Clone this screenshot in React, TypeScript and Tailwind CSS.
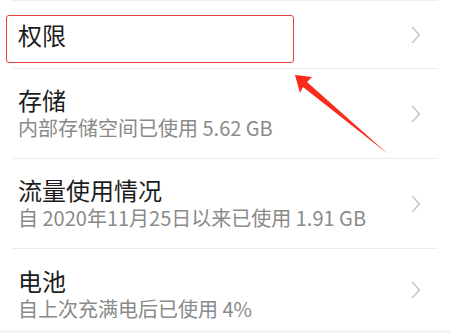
import React from "react";

const Chevron = () => (
  <svg width="10" height="18" viewBox="0 0 10 18" className="shrink-0">
    <polyline points="1.5,1.5 8.5,9 1.5,16.5" fill="none" stroke="#c6c6c6" strokeWidth="1.5" strokeLinecap="round" strokeLinejoin="round" />
  </svg>
);

type RowProps = { title: string; sub?: string; h: string; pt?: string; last?: boolean };

const Row = ({ title, sub, h, pt, last }: RowProps) => (
  <div className={`flex items-start justify-between pl-[6px] pr-[17px] ${h} ${last ? "" : "border-b border-[#ececec]"}`}>
    {sub ? (
      <div className={`flex flex-col ${pt}`}>
        <div className="text-[24px] leading-[30px] text-[#1c1c1c]">{title}</div>
        <div className="text-[20px] leading-[26px] text-[#8a8a8a]">{sub}</div>
      </div>
    ) : (
      <div className="flex h-full items-center text-[24px] leading-[30px] text-[#1c1c1c]">{title}</div>
    )}
    <div className="flex h-full items-center">
      <Chevron />
    </div>
  </div>
);

export default function App() {
  return (
    <div
      className="relative w-[450px] h-[333px] overflow-hidden bg-white"
      style={{ fontFamily: '"Noto Sans CJK SC", "Noto Sans", sans-serif' }}
    >
      <div className="mx-3 h-[1px] bg-[#efefef]" />
      <div className="mx-3">
        <Row title="权限" h="h-[68px]" />
        <Row title="存储" sub="内部存储空间已使用 5.62 GB" h="h-[90px]" pt="pt-4" />
        <Row title="流量使用情况" sub="自 2020年11月25日以来已使用 1.91 GB" h="h-[90px]" pt="pt-4" />
        <Row title="电池" sub="自上次充满电后已使用 4%" h="h-[81px]" pt="pt-[17px]" last />
      </div>
      <div className="h-[3px] bg-[#f3f3f3]" />

      <div className="absolute left-[6px] top-[15px] w-[288px] h-[48px] rounded-[3px] border-[1.5px] border-[#e2403f]" />
      <svg className="absolute left-0 top-0" width="450" height="333" viewBox="0 0 450 333">
        <polygon points="295,75 312,77 307,82 388,154 303,87 300,93" fill="#fa2a1c" />
      </svg>
    </div>
  );
}
